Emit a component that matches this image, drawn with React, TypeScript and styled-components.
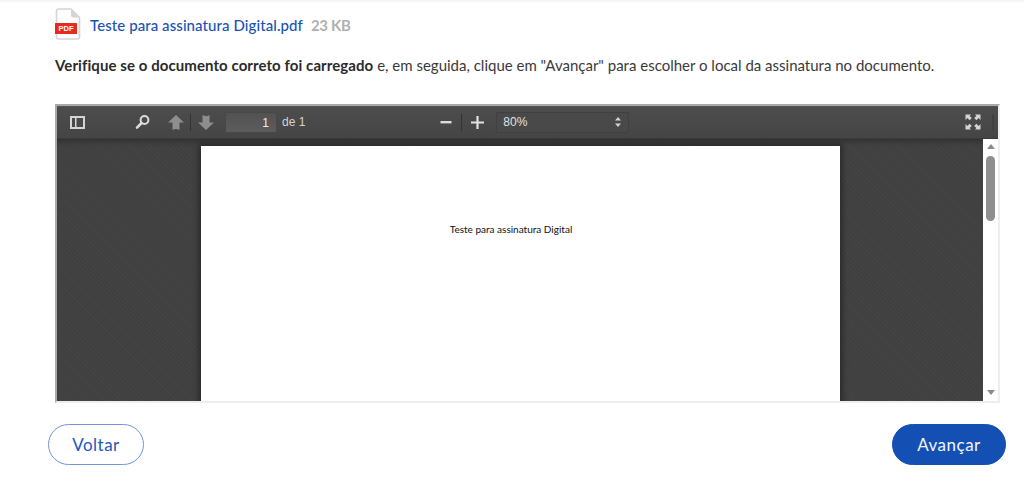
import React from 'react';
import styled, { createGlobalStyle } from 'styled-components';

const Global = createGlobalStyle`
  html, body { margin: 0; padding: 0; background: #fff; }
  body { font-family: Lato, "Open Sans", sans-serif; overflow: hidden; }
`;

const Page = styled.div`
  width: 1024px;
  height: 499px;
  box-sizing: border-box;
  padding-top: 8px;
  background: linear-gradient(#f2f2f2, #fff 3px);
  display: flex;
  flex-direction: column;
`;

const FileRow = styled.div`
  display: flex;
  align-items: center;
  height: 32px;
  padding-left: 55px;
`;

const FileName = styled.a`
  margin-left: 8px;
  margin-top: 1px;
  color: #1a52b5;
  font-size: 15px;
  font-weight: 500;
  letter-spacing: 0.08px;
`;

const FileSize = styled.span`
  margin-left: 8px;
  margin-top: 1px;
  color: #b0b0b0;
  font-size: 15px;
  font-weight: 700;
  letter-spacing: -0.3px;
`;

const Intro = styled.p`
  margin: 14px 0 0 55px;
  height: 22px;
  line-height: 22px;
  font-size: 15px;
  color: #3a3a3a;
  letter-spacing: 0;
  white-space: nowrap;
  b { font-weight: 700; color: #2b2b2b; letter-spacing: 0.08px; }
`;

const Viewer = styled.div`
  margin: 28px 24px 0 55px;
  height: 299px;
  box-sizing: border-box;
  border: 2px solid;
  border-color: #a9a9a9 #eeeeee #eeeeee #a9a9a9;
  display: flex;
  flex-direction: column;
`;

const Toolbar = styled.div`
  flex: none;
  height: 32px;
  display: flex;
  align-items: center;
  background: linear-gradient(#4d4d4d, #454545);
  border-bottom: 1px solid #3a3a3a;
  box-shadow: inset 0 1px 0 #555;
  color: #d9d9d9;
  font-family: "Liberation Sans", Arial, sans-serif;
  font-size: 12px;
`;

const ToolIcon = styled.svg<{ $left: number }>`
  flex: none;
  margin-left: ${p => p.$left}px;
  display: block;
`;

const Divider = styled.span<{ $left: number }>`
  flex: none;
  width: 1px;
  height: 17px;
  margin-left: ${p => p.$left}px;
  background: #333;
`;

const PageInput = styled.div`
  flex: none;
  width: 52px;
  height: 21px;
  margin-left: 11px;
  box-sizing: border-box;
  padding-right: 7px;
  text-align: right;
  line-height: 20px;
  color: #eee;
  background: linear-gradient(#525252, #5c5c5c);
  border: 1px solid #484848;
  border-radius: 2px;
`;

const PageCount = styled.span`
  flex: none;
  margin-left: 5px;
  color: #d4d4d4;
`;

const ZoomSelect = styled.div`
  flex: none;
  width: 133px;
  height: 21px;
  margin-left: 12px;
  box-sizing: border-box;
  padding: 0 7px 0 6px;
  display: flex;
  align-items: center;
  justify-content: space-between;
  background: #494949;
  border: 1px solid #404040;
  border-radius: 2px;
  color: #e2e2e2;
`;

const EndRule = styled.span`
  flex: none;
  width: 2px;
  height: 17px;
  margin-left: 11px;
  background: #404040;
`;

const Body = styled.div`
  flex: 1;
  min-height: 0;
  display: flex;
`;

const Canvas = styled.div`
  flex: 1;
  overflow: hidden;
  display: flex;
  justify-content: center;
  padding-top: 7px;
  background-color: #404040;
  background-image: repeating-linear-gradient(45deg, rgba(255,255,255,.018) 0 1px, transparent 1px 3px);
  box-shadow: inset 0 7px 6px -5px rgba(0,0,0,.3);
`;

const Sheet = styled.div`
  flex: none;
  width: 639px;
  height: 700px;
  background: #fff;
  box-shadow: 0 0 6px 2px rgba(0,0,0,.4);
  text-align: center;
  font-family: Lato, "Open Sans", sans-serif;
  font-size: 10px;
  color: #111;
  padding: 77px 18px 0 0;
  box-sizing: border-box;
`;

const Scrollbar = styled.div`
  flex: none;
  width: 15px;
  background: #fff;
  display: flex;
  flex-direction: column;
  align-items: center;
`;

const Arrow = styled.span<{ $down?: boolean }>`
  flex: none;
  width: 0;
  height: 0;
  border-left: 4.5px solid transparent;
  border-right: 4.5px solid transparent;
  ${p => (p.$down ? 'border-top: 5px solid #8a8a8a;' : 'border-bottom: 5px solid #8a8a8a;')}
  margin: ${p => (p.$down ? 'auto 0 6px' : '5px 0 0')};
`;

const Thumb = styled.div`
  flex: none;
  width: 9px;
  height: 65px;
  margin-top: 7px;
  border-radius: 5px;
  background: #8f8f8f;
`;

const Actions = styled.div`
  display: flex;
  justify-content: space-between;
  margin: 21px 18px 0 48px;
`;

const PillButton = styled.button<{ $primary?: boolean }>`
  height: 41px;
  border-radius: 21px;
  font-family: Lato, sans-serif;
  font-size: 17px;
  font-weight: 400;
  letter-spacing: 0.5px;
  cursor: pointer;
  width: ${p => (p.$primary ? 114 : 96)}px;
  color: ${p => (p.$primary ? '#f2f5fb' : '#2059b8')};
  background: ${p => (p.$primary ? '#1450b4' : '#fff')};
  border: 1px solid ${p => (p.$primary ? '#1450b4' : '#6f97d8')};
`;

const PdfIcon = () => (
  <svg width="27" height="32" viewBox="0 0 27 32" style={{ display: 'block', flex: 'none' }}>
    <path d="M3.5 1H16l8.5 8.5V29a2 2 0 0 1-2 2h-19a2 2 0 0 1-2-2V3a2 2 0 0 1 2-2Z" fill="#fff" stroke="#d4d4d4" strokeWidth="1.6" />
    <path d="M16 1v6.5a2 2 0 0 0 2 2h6.5Z" fill="#d4d4d4" />
    <rect x="0" y="15" width="22" height="11" rx="0.5" fill="#e8291c" />
    <text x="11" y="23.4" textAnchor="middle" fontFamily="Liberation Sans, sans-serif" fontWeight="700" fontSize="7.5" fill="#fff">PDF</text>
  </svg>
);

export default function App() {
  return (
    <Page>
      <Global />
      <FileRow>
        <PdfIcon />
        <FileName>Teste para assinatura Digital.pdf</FileName>
        <FileSize>23 KB</FileSize>
      </FileRow>
      <Intro>
        <b>Verifique se o documento correto foi carregado</b> e, em seguida, clique em "Avançar" para escolher o local da assinatura no documento.
      </Intro>
      <Viewer>
        <Toolbar>
          <ToolIcon $left={13} width="15" height="15" viewBox="0 0 15 15">
            <path fillRule="evenodd" d="M0 1h15v13H0ZM2 3v9h3V3Zm4.5 0v9H13V3Z" fill="#d4d4d4" />
          </ToolIcon>
          <ToolIcon $left={50} width="16" height="16" viewBox="0 0 16 16">
            <circle cx="9.5" cy="6" r="3.9" fill="none" stroke="#dcdcdc" strokeWidth="2" />
            <path d="M6.6 9 2 13.6" stroke="#dcdcdc" strokeWidth="2.6" strokeLinecap="round" />
          </ToolIcon>
          <ToolIcon $left={17} width="16" height="17" viewBox="0 0 16 17">
            <path d="M8 1 16 8.5 11.5 8.5 11.5 16C9 14.5 6.5 14.5 4.5 16V8.5H0Z" fill="#8e8e8e" />
          </ToolIcon>
          <Divider $left={6} />
          <ToolIcon $left={7} width="16" height="17" viewBox="0 0 16 17">
            <path d="M8 16 0 8.5 4.5 8.5 4.5 1C7 2.5 9.5 2.5 11.5 1V8.5H16Z" fill="#8e8e8e" />
          </ToolIcon>
          <PageInput>1</PageInput>
          <PageCount>de 1</PageCount>
          <ToolIcon $left={135} width="12" height="12" viewBox="0 0 12 12">
            <rect x="0.5" y="5" width="11" height="2.4" fill="#dcdcdc" />
          </ToolIcon>
          <Divider $left={9} />
          <ToolIcon $left={9} width="13" height="13" viewBox="0 0 13 13">
            <path d="M5.4 0h2.2v5.4H13v2.2H7.6V13H5.4V7.6H0V5.4h5.4Z" fill="#e2e2e2" />
          </ToolIcon>
          <ZoomSelect>
            80%
            <svg width="6" height="10" viewBox="0 0 6 10">
              <path d="M3 0 6 3.6H0ZM3 10 0 6.4h6Z" fill="#d4d4d4" />
            </svg>
          </ZoomSelect>
          <ToolIcon $left={336} width="16" height="16" viewBox="0 0 16 16">
            <path d="M0.5 0.5H6L4.6 1.9 6.8 4.1 4.6 6.3 2.4 4.1 0.5 6ZM15.5 0.5V6L13.6 4.1 11.4 6.3 9.2 4.1 11.4 1.9 10 0.5ZM0.5 15.5V10L2.4 11.9 4.6 9.7 6.8 11.9 4.6 14.1 6 15.5ZM15.5 15.5H10L11.4 14.1 9.2 11.9 11.4 9.7 13.6 11.9 15.5 10Z" fill="#d4d4d4" />
          </ToolIcon>
          <EndRule />
        </Toolbar>
        <Body>
          <Canvas>
            <Sheet>Teste para assinatura Digital</Sheet>
          </Canvas>
          <Scrollbar>
            <Arrow />
            <Thumb />
            <Arrow $down />
          </Scrollbar>
        </Body>
      </Viewer>
      <Actions>
        <PillButton>Voltar</PillButton>
        <PillButton $primary>Avançar</PillButton>
      </Actions>
    </Page>
  );
}
